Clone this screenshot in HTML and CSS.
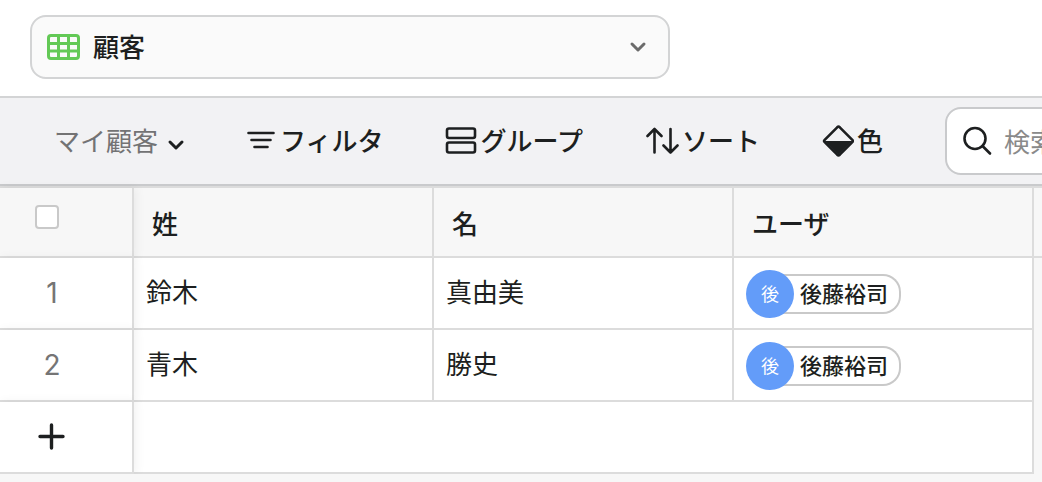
FILE: index.html
```html
<!DOCTYPE html>
<html lang="ja">
<head>
    <meta charset="UTF-8">
    <meta name="viewport" content="width=device-width, initial-scale=1.0">
    <title>顧客</title>
    <link rel="stylesheet" href="styles.css">
</head>
<body>
    <header class="header">
        <label class="table-picker">
            <svg class="table-icon" width="34" height="28" viewBox="0 0 34 28">
                <rect x="1.5" y="2.5" width="30" height="23" rx="2.5"/>
                <path d="M2 10.5h29M2 18h29M11.5 3v22M21.5 3v22"/>
            </svg>
            <select aria-label="テーブル">
                <option>顧客</option>
            </select>
            <svg class="chevron" width="18" height="12" viewBox="0 0 18 12">
                <path d="M3 3l6 6 6-6"/>
            </svg>
        </label>
    </header>

    <nav class="toolbar">
        <label class="view-picker">
            <select aria-label="ビュー">
                <option>マイ顧客</option>
            </select>
            <svg class="chevron" width="18" height="12" viewBox="0 0 18 12">
                <path d="M3 3l6 6 6-6"/>
            </svg>
        </label>

        <button class="tool" type="button">
            <svg width="30" height="32" viewBox="0 0 30 32">
                <path d="M1.5 8h25M4.5 15h19M7.5 22h13"/>
            </svg>
            フィルタ
        </button>

        <button class="tool" type="button">
            <svg width="32" height="32" viewBox="0 0 32 32">
                <rect x="2" y="3.5" width="28" height="9.5" rx="2"/>
                <rect x="2" y="17.5" width="28" height="10" rx="2"/>
            </svg>
            グループ
        </button>

        <button class="tool" type="button">
            <svg width="34" height="32" viewBox="0 0 34 32">
                <path d="M9.5 27.5V4M2.5 11l7-7 7 7M25.5 4v23.5M18.5 20.5l7 7 7-7"/>
            </svg>
            ソート
        </button>

        <button class="tool" type="button">
            <svg width="32" height="32" viewBox="0 0 32 32">
                <path d="M15.2 2.3L2.7 14.8q-1.2 1.2 0 2.4L15.2 29.7q1.3 1.2 2.6 0L30.3 17.2q1.2-1.2 0-2.4L17.8 2.3q-1.3-1.2-2.6 0z"/>
                <path class="fill" d="M2.5 16h28l-14 14z"/>
            </svg>
            色
        </button>

        <label class="search">
            <svg width="30" height="30" viewBox="0 0 30 30">
                <circle cx="13" cy="12.5" r="10.5"/>
                <path d="M20.5 20l7.5 7.5"/>
            </svg>
            <input type="search" placeholder="検索" aria-label="検索">
        </label>
    </nav>

    <table class="grid">
        <colgroup>
            <col class="col-number">
            <col class="col-field">
            <col class="col-field">
            <col class="col-field">
            <col>
        </colgroup>
        <thead>
            <tr>
                <th class="row-head"><input type="checkbox" aria-label="すべて選択"></th>
                <th>姓</th>
                <th>名</th>
                <th>ユーザ</th>
                <th class="rest"></th>
            </tr>
        </thead>
        <tbody>
            <tr>
                <td class="row-head"><span class="number">1</span></td>
                <td>鈴木</td>
                <td>真由美</td>
                <td class="user-cell">
                    <div class="user">
                        <span class="avatar">後</span>
                        <span class="user-name">後藤裕司</span>
                    </div>
                </td>
                <td class="rest"></td>
            </tr>
            <tr>
                <td class="row-head"><span class="number">2</span></td>
                <td>青木</td>
                <td>勝史</td>
                <td class="user-cell">
                    <div class="user">
                        <span class="avatar">後</span>
                        <span class="user-name">後藤裕司</span>
                    </div>
                </td>
                <td class="rest"></td>
            </tr>
            <tr>
                <td class="row-head">
                    <button class="add-row" type="button" aria-label="行を追加">
                        <svg width="28" height="28" viewBox="0 0 28 28">
                            <path d="M13.5 2v23M2 13.5h23"/>
                        </svg>
                    </button>
                </td>
                <td colspan="3"></td>
                <td class="rest"></td>
            </tr>
        </tbody>
    </table>
</body>
</html>
```

FILE: styles.css
```css
* {
    margin: 0;
    padding: 0;
    box-sizing: border-box;
}

body {
    font-family: "Noto Sans CJK JP", sans-serif;
    font-size: 26px;
    line-height: 36px;
    color: #1d1f20;
    background: #f7f7f7;
    overflow-x: hidden;
}

button,
input,
select {
    font: inherit;
    color: inherit;
    background: none;
    border: none;
    outline: none;
    appearance: none;
}

svg {
    flex: none;
    fill: none;
    stroke: currentColor;
    stroke-width: 2.6;
    stroke-linecap: round;
    stroke-linejoin: round;
}

.header {
    padding: 15px 30px 17px;
    background: #fff;
}

.table-picker {
    display: flex;
    align-items: center;
    gap: 12px;
    max-width: 640px;
    height: 64px;
    padding: 0 21px 0 15px;
    font-weight: 500;
    background: #fafafa;
    border: 2px solid #d3d4d5;
    border-radius: 16px;
}

.table-picker select {
    flex: 1;
    padding-bottom: 2px;
}

.table-icon {
    color: #63c956;
    stroke-width: 3;
}

.chevron {
    stroke-width: 3;
}

.table-picker .chevron {
    color: #6b6b6b;
}

.toolbar {
    display: flex;
    align-items: center;
    gap: 62px;
    height: 90px;
    padding-left: 54px;
    white-space: nowrap;
    background: #f2f2f4;
    border-top: 2px solid #d3d4d5;
    border-bottom: 2px solid #c9cacc;
    overflow: hidden;
}

.view-picker {
    display: flex;
    flex: none;
    align-items: center;
    gap: 8px;
    padding-bottom: 2px;
}

.view-picker select {
    color: #737374;
}

.view-picker .chevron {
    margin-top: 10px;
}

.tool {
    display: flex;
    flex: none;
    align-items: center;
    gap: 3px;
    padding-bottom: 2px;
    font-weight: 500;
    cursor: pointer;
}

.tool svg {
    margin-top: 2px;
}

.tool .fill {
    fill: currentColor;
    stroke: none;
}

.search {
    display: flex;
    flex: none;
    align-items: center;
    gap: 12px;
    width: 360px;
    height: 68px;
    padding: 0 15px;
    background: #fff;
    border: 2px solid #c9cacc;
    border-radius: 16px;
}

.search input {
    flex: 1;
    min-width: 0;
}

.search input::placeholder {
    color: #8a8a8a;
    opacity: 1;
}

.grid {
    width: 100%;
    table-layout: fixed;
    border-collapse: separate;
    border-spacing: 0;
    border-top: 2px solid #dcdcdc;
}

.col-number {
    width: 134px;
}

.col-field {
    width: 300px;
}

th,
td {
    height: 72px;
    text-align: left;
    vertical-align: middle;
    border-right: 2px solid #dcdcdc;
    border-bottom: 2px solid #dcdcdc;
}

th {
    height: 70px;
    padding: 2px 0 0 18px;
    font-weight: 500;
    background: #f7f7f7;
}

td {
    padding: 0 0 4px 12px;
    background: #fff;
}

.user-cell {
    padding: 2px 0 0 12px;
}

.row-head {
    position: relative;
    z-index: 1;
    padding: 0 0 0 35px;
    box-shadow: 2px 0 10px rgba(0, 0, 0, 0.06);
}

.rest {
    padding: 0;
    background: #f7f7f7;
    border-right: none;
}

td.rest {
    border-bottom: none;
}

.row-head input {
    display: block;
    width: 24px;
    height: 24px;
    margin-bottom: 10px;
    background: #fff;
    border: 2px solid #c9c9c9;
    border-radius: 4px;
}

.number {
    display: block;
    width: 34px;
    font-family: Inter, sans-serif;
    font-size: 28px;
    color: #757575;
    text-align: center;
}

.user {
    display: flex;
    align-items: center;
}

.avatar {
    position: relative;
    width: 48px;
    height: 48px;
    font-size: 18px;
    line-height: 46px;
    color: #fff;
    text-align: center;
    background: #639cf9;
    border-radius: 50%;
}

.user-name {
    height: 40px;
    margin-left: -20px;
    padding: 0 11px 0 26px;
    font-size: 22px;
    font-weight: 500;
    line-height: 32px;
    border: 2px solid #c9c9c9;
    border-left: none;
    border-radius: 0 18px 18px 0;
}

.add-row {
    display: flex;
    justify-content: center;
    width: 34px;
    cursor: pointer;
}

.add-row svg {
    stroke-width: 3.4;
}
```
